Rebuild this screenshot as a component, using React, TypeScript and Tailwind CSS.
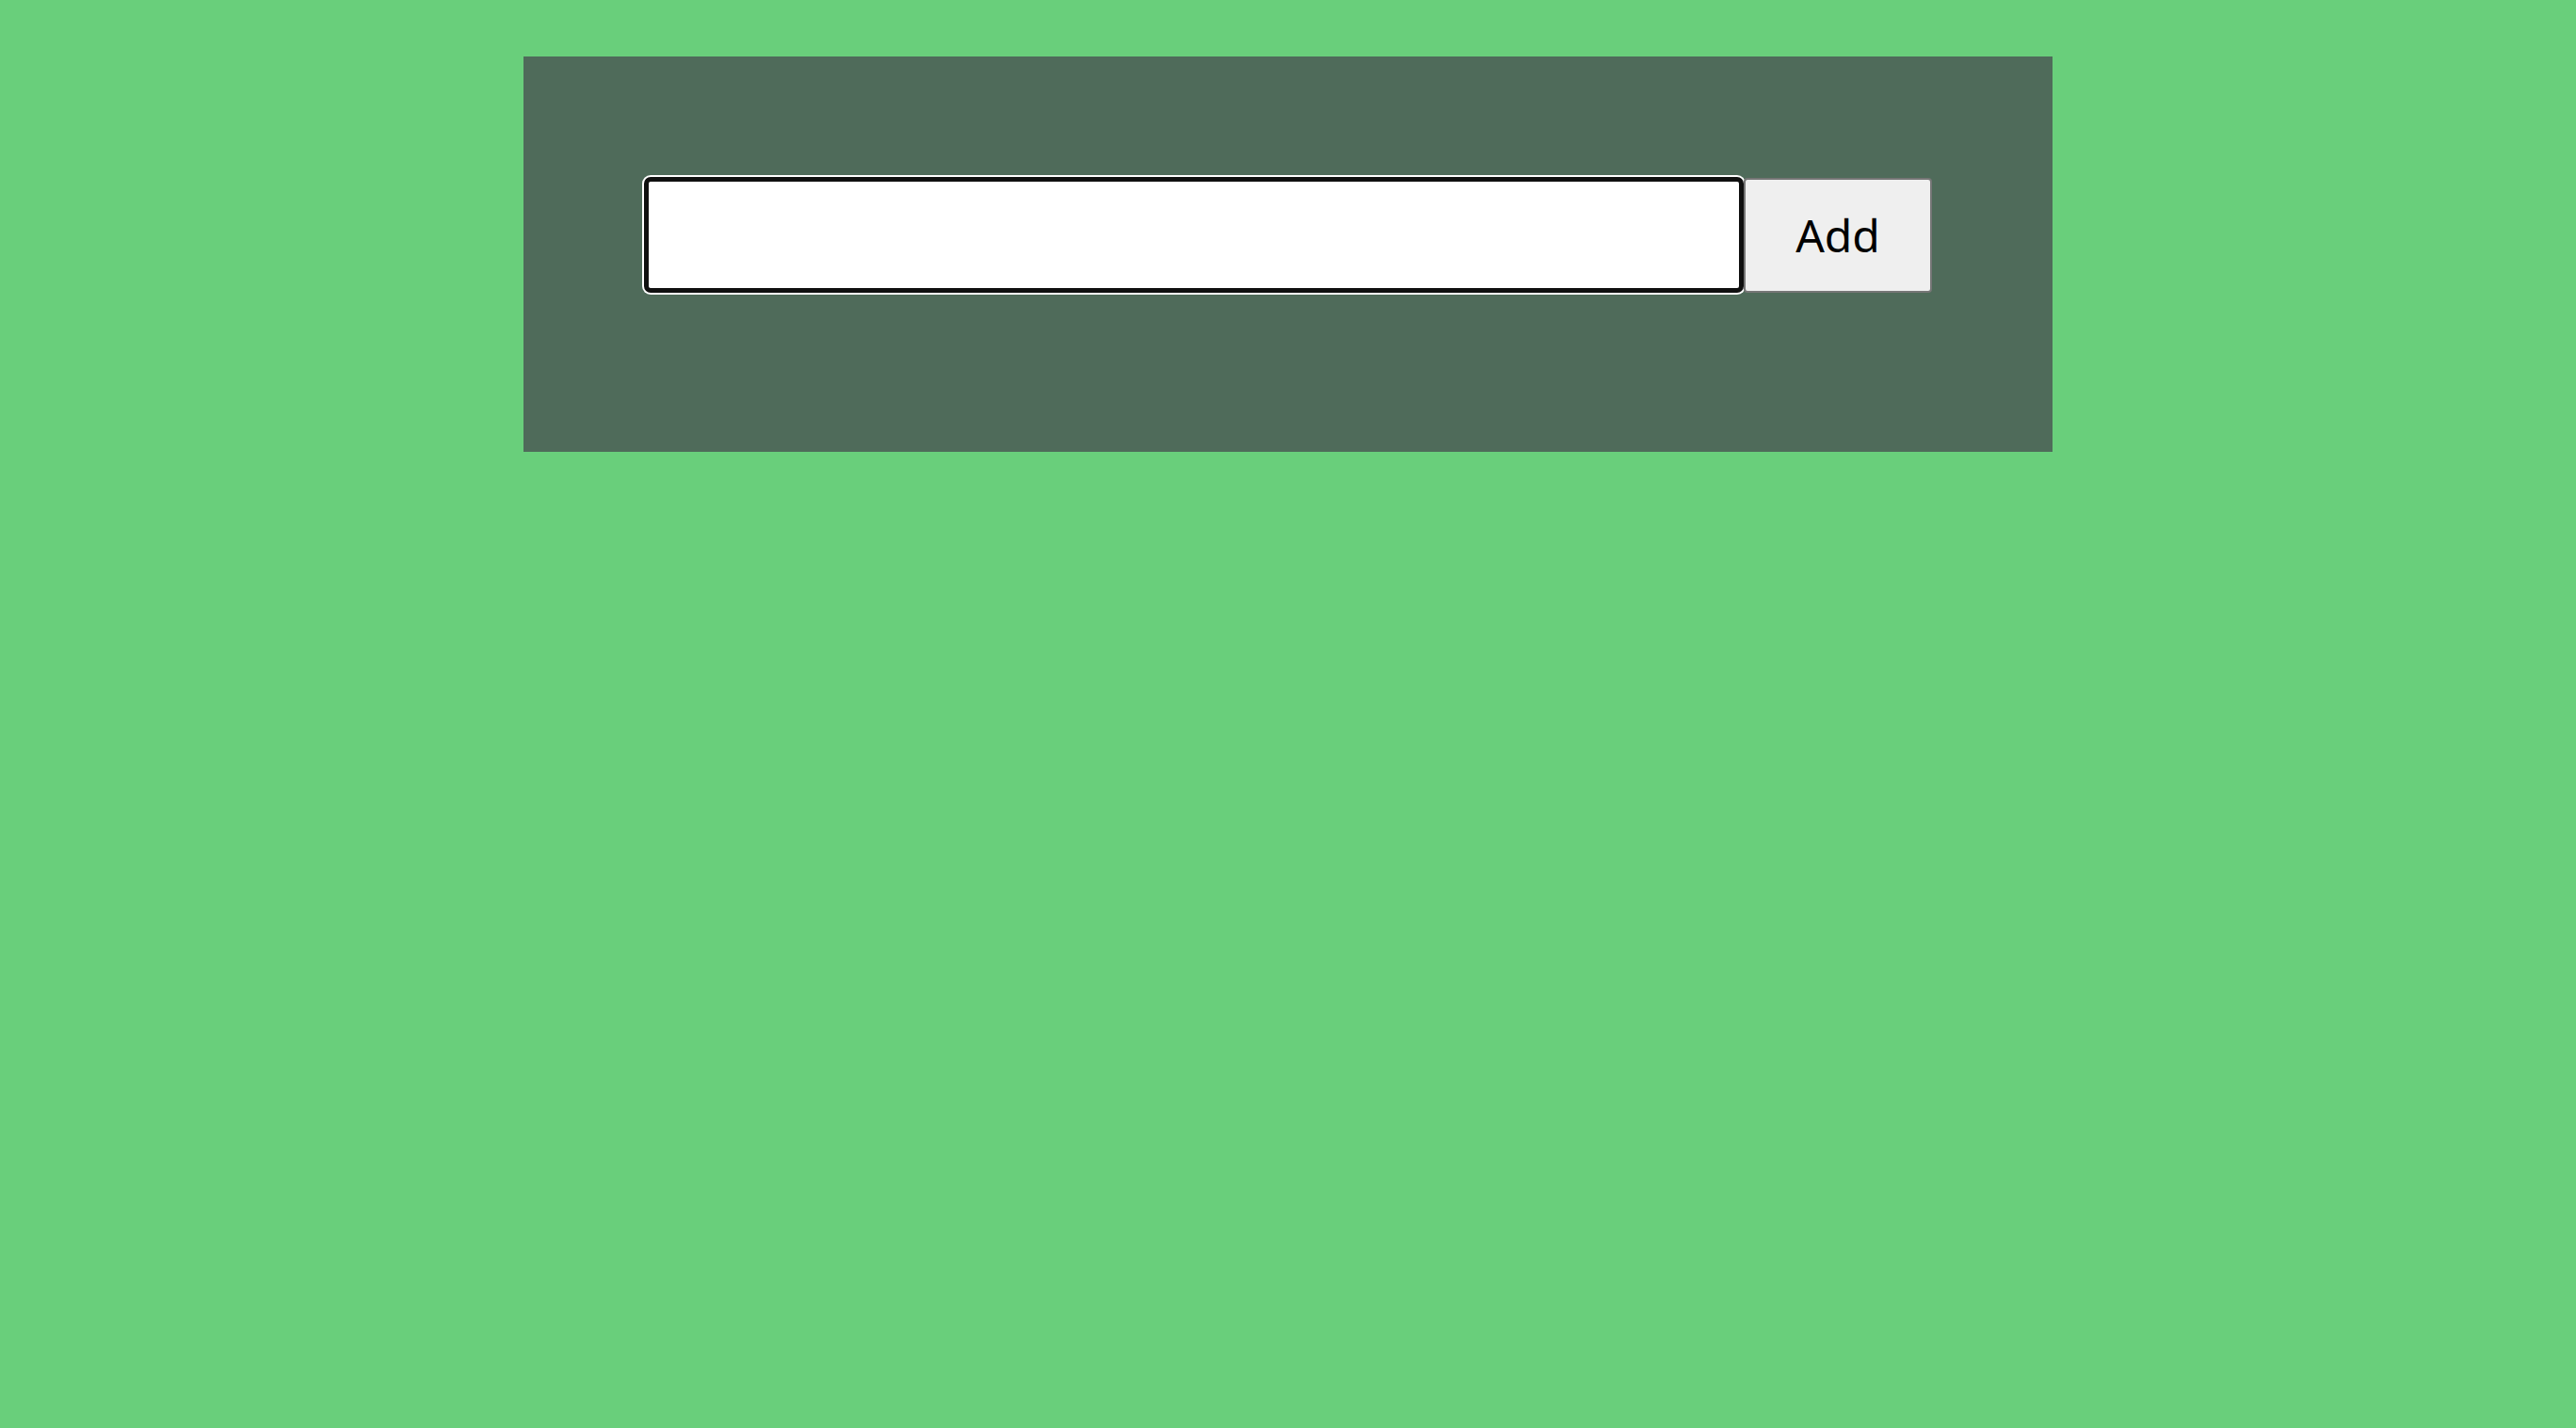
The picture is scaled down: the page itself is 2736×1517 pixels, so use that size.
import { useState } from "react";

export default function App() {
  const [text, setText] = useState("");
  const [items, setItems] = useState<string[]>([]);

  const addItem = () => {
    if (!text.trim()) return;
    setItems((prev) => [...prev, text.trim()]);
    setText("");
  };

  return (
    <div
      className="min-h-screen w-full bg-[#69cf7b] pt-[60px]"
      style={{ fontFamily: '"Noto Sans", Arial, sans-serif' }}
    >
      <div className="mx-auto w-[1624px] bg-[#4f6b5a] px-[128px] pt-[128px] pb-[169px]">
        {/* Input row */}
        <div className="flex items-center">
          <input
            type="text"
            value={text}
            onChange={(e) => setText(e.target.value)}
            onKeyDown={(e) => e.key === "Enter" && addItem()}
            className="h-[123px] flex-1 rounded-[7px] bg-white px-4 text-[48px] text-black outline-none shadow-[inset_0_0_0_5px_#101010,0_0_0_2px_#ffffff]"
          />
          <button
            type="button"
            onClick={addItem}
            className="relative h-[122px] w-[200px] rounded-[4px] border-2 border-[#767676] bg-[#efefef] text-[48px] leading-none text-black"
          >
            Add
          </button>
        </div>

        {items.length > 0 && (
          <ul className="mt-4 text-[40px] text-white">
            {items.map((item, i) => (
              <li key={i}>{item}</li>
            ))}
          </ul>
        )}
      </div>
    </div>
  );
}
